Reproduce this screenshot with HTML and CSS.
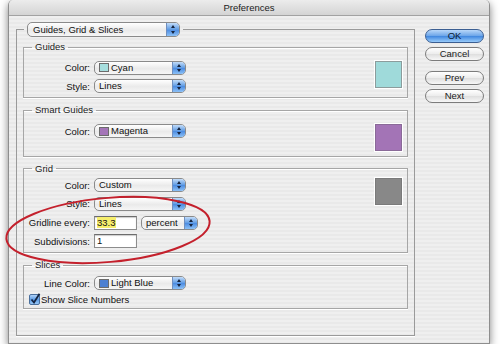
FILE: index.html
```html
<!DOCTYPE html>
<html lang="en">
<head>
    <meta charset="UTF-8">
    <title>Preferences</title>
    <link rel="stylesheet" href="styles.css">
</head>
<body>

    <div class="window">
        <div class="titlebar">Preferences</div>

        <div class="content">
            <fieldset class="panel">
                <legend class="panel-legend">
                    <div class="popup popup-main"><span class="ptext">Guides, Grid &amp; Slices</span><span class="stepper"></span></div>
                </legend>

                <div class="groups">
                    <!-- Guides -->
                    <fieldset class="group guides">
                        <legend>Guides</legend>
                        <div class="group-body">
                            <div class="rows">
                                <div class="row">
                                    <span class="label">Color:</span>
                                    <div class="popup"><span class="chip chip-cyan"></span><span class="ptext">Cyan</span><span class="stepper"></span></div>
                                </div>
                                <div class="row">
                                    <span class="label">Style:</span>
                                    <div class="popup"><span class="ptext">Lines</span><span class="stepper"></span></div>
                                </div>
                            </div>
                            <div class="swatch swatch-cyan"></div>
                        </div>
                    </fieldset>

                    <!-- Smart Guides -->
                    <fieldset class="group smart">
                        <legend>Smart Guides</legend>
                        <div class="group-body">
                            <div class="rows">
                                <div class="row">
                                    <span class="label">Color:</span>
                                    <div class="popup"><span class="chip chip-magenta"></span><span class="ptext">Magenta</span><span class="stepper"></span></div>
                                </div>
                            </div>
                            <div class="swatch swatch-magenta"></div>
                        </div>
                    </fieldset>

                    <!-- Grid -->
                    <fieldset class="group grid">
                        <legend>Grid</legend>
                        <div class="group-body">
                            <div class="rows">
                                <div class="row">
                                    <span class="label">Color:</span>
                                    <div class="popup"><span class="ptext">Custom</span><span class="stepper"></span></div>
                                </div>
                                <div class="row">
                                    <span class="label">Style:</span>
                                    <div class="popup"><span class="ptext">Lines</span><span class="stepper"></span></div>
                                </div>
                                <div class="row">
                                    <span class="label">Gridline every:</span>
                                    <div class="field"><span class="selected">33.3</span></div>
                                    <div class="popup popup-small"><span class="ptext">percent</span><span class="stepper"></span></div>
                                </div>
                                <div class="row">
                                    <span class="label">Subdivisions:</span>
                                    <div class="field">1</div>
                                </div>
                            </div>
                            <div class="swatch swatch-gray"></div>
                        </div>
                    </fieldset>

                    <!-- Slices -->
                    <fieldset class="group slices">
                        <legend>Slices</legend>
                        <div class="rows">
                            <div class="row">
                                <span class="label">Line Color:</span>
                                <div class="popup"><span class="chip chip-blue"></span><span class="ptext">Light Blue</span><span class="stepper"></span></div>
                            </div>
                            <div class="check-row">
                                <svg class="checkbox" width="12" height="12" viewBox="0 0 12 12">
                                    <defs>
                                        <linearGradient id="cbg" x1="0" y1="0" x2="0" y2="1">
                                            <stop offset="0" stop-color="#b9d8fa"/>
                                            <stop offset="0.5" stop-color="#5d9de6"/>
                                            <stop offset="1" stop-color="#9ccbf8"/>
                                        </linearGradient>
                                    </defs>
                                    <rect x="0.5" y="1.5" width="10" height="10" rx="1.5" fill="url(#cbg)" stroke="#4a6f9c"/>
                                    <path d="M2.5 6.5 L5 9.5 L10.5 0.8" fill="none" stroke="#14233f" stroke-width="1.8"/>
                                </svg>
                                <span>Show Slice Numbers</span>
                            </div>
                        </div>
                    </fieldset>
                </div>
            </fieldset>

            <div class="buttons">
                <div class="btn btn-ok">OK</div>
                <div class="btn">Cancel</div>
                <div class="btn btn-gap">Prev</div>
                <div class="btn">Next</div>
            </div>
        </div>
    </div>

    <svg class="annotation" width="500" height="358" viewBox="0 0 500 358">
        <ellipse cx="108" cy="230" rx="102" ry="32" transform="rotate(-5 108 230)" fill="none" stroke="#c4202c" stroke-width="2"/>
    </svg>

</body>
</html>
```

FILE: styles.css
```css
body {
    margin: 0;
    background: #fff;
    font-family: "Liberation Sans", Arial, sans-serif;
    font-size: 9.5px;
    color: #111;
}

.window {
    width: 482px;
    margin-left: 8px;
    box-sizing: border-box;
    border: 1px solid #8e8e8e;
    border-top: none;
    border-radius: 5px 5px 0 0;
    background: repeating-linear-gradient(#efefef 0, #efefef 2px, #e9e9e9 2px, #e9e9e9 4px);
    box-shadow: 0 3px 8px rgba(0, 0, 0, 0.5);
}

.titlebar {
    height: 16px;
    box-sizing: border-box;
    border-bottom: 1px solid #a2a2a2;
    border-radius: 5px 5px 0 0;
    background: linear-gradient(#ececec, #d4d4d4);
    text-align: center;
    line-height: 15px;
    color: #222;
}

.content {
    display: flex;
    align-items: flex-start;
    padding: 6px 5px 7px 7px;
}

/* outer box with the panel popup */
.panel {
    width: 399px;
    box-sizing: border-box;
    margin: 0;
    min-width: 0;
    padding: 4px 6px 26px;
    border: 1px solid #9a9a9a;
    box-shadow: 0 1px 0 #fff;
}

.panel-legend {
    padding: 0 3px;
    margin-left: 1px;
}

.groups {
    display: flex;
    flex-direction: column;
    gap: 6px;
}

.group {
    margin: 0;
    min-width: 0;
    padding: 0 5px 0 0;
    border: 1px solid #a6a6a6;
    box-shadow: 0 1px 0 #fff, inset 0 1px 0 #fff;
}

.group legend {
    line-height: 12px;
    padding: 0 3px;
    margin-left: 8px;
    color: #222;
}

.guides { padding-top: 7.5px; padding-bottom: 4px; }
.smart  { padding-top: 8px;   padding-bottom: 4.5px; }
.grid   { padding-top: 3.5px; padding-bottom: 4px; }
.slices { padding-top: 5px;   padding-bottom: 3px; }

.group-body {
    display: flex;
    align-items: flex-start;
}

.rows {
    flex: 1;
    display: flex;
    flex-direction: column;
    gap: 4.7px;
}

.row {
    display: flex;
    align-items: center;
    height: 14px;
}

.label {
    width: 66px;
    margin-right: 4px;
    text-align: right;
    white-space: nowrap;
}

/* aqua popup menus */
.popup {
    width: 92px;
    height: 14px;
    box-sizing: border-box;
    display: flex;
    align-items: center;
    padding-left: 4px;
    border: 1px solid #8a8a8a;
    border-radius: 5px;
    background: linear-gradient(#ffffff, #eaeaea 55%, #f6f6f6);
    overflow: hidden;
}

.popup-main {
    width: 153px;
    height: 15px;
    padding-left: 5px;
}

.popup-small {
    width: 57px;
    margin-left: 4px;
}

.ptext {
    white-space: nowrap;
    line-height: 12px;
}

.stepper {
    position: relative;
    margin-left: auto;
    width: 12px;
    height: 100%;
    flex-shrink: 0;
    border-left: 1px solid #6f8fbf;
    background: linear-gradient(#c2dcf9, #5f9be3 50%, #4a8ae0 51%, #8cc1f7);
}

.stepper::before,
.stepper::after {
    content: "";
    position: absolute;
    left: 4px;
    border-left: 2px solid transparent;
    border-right: 2px solid transparent;
}

.stepper::before {
    top: 2px;
    border-bottom: 3px solid #15233d;
}

.stepper::after {
    bottom: 2px;
    border-top: 3px solid #15233d;
}

.chip {
    width: 10px;
    height: 9px;
    box-sizing: border-box;
    margin-right: 2px;
    border: 1px solid #6c6c6c;
    flex-shrink: 0;
}

.chip-cyan { background: #a6dede; }
.chip-magenta { background: #a475b8; }
.chip-blue { background: #4d80d2; }

.swatch {
    width: 27px;
    height: 27px;
    box-sizing: border-box;
    border: 1px solid #8c9c9c;
    box-shadow: 0 0 0 1px #fff;
}

.swatch-cyan { background: #9fdada; }
.swatch-magenta { background: #a374b6; border-color: #8a6a98; }
.swatch-gray { background: #888888; border-color: #7a7a7a; }

/* text fields */
.field {
    width: 43px;
    height: 14px;
    box-sizing: border-box;
    padding-left: 2px;
    border: 1px solid #8c8c8c;
    border-top-color: #6c6c6c;
    background: #fff;
    box-shadow: inset 0 1px 1px rgba(0, 0, 0, 0.2);
    line-height: 12px;
}

.selected {
    background: #f6ee6c;
}

.check-row {
    display: flex;
    align-items: center;
    height: 12px;
    margin-top: -1.5px;
    padding-left: 5px;
}

.checkbox {
    margin-right: 0;
}

/* aqua push buttons */
.buttons {
    display: flex;
    flex-direction: column;
    gap: 4px;
    width: 59px;
    margin-left: 10px;
    margin-top: 7px;
}

.btn {
    height: 14px;
    box-sizing: border-box;
    border: 1px solid #7c7c7c;
    border-radius: 7px;
    background: linear-gradient(#ffffff, #ececec 50%, #dedede 51%, #f7f7f7);
    text-align: center;
    line-height: 12px;
    color: #222;
}

.btn-ok {
    border-color: #3c5f92;
    background: linear-gradient(#b8d7f9, #6aa4e8 50%, #3f86df 51%, #98cbfa);
    color: #0c1a33;
}

.btn-gap {
    margin-top: 6px;
}

.annotation {
    position: absolute;
    top: 0;
    left: 0;
    pointer-events: none;
}
```
